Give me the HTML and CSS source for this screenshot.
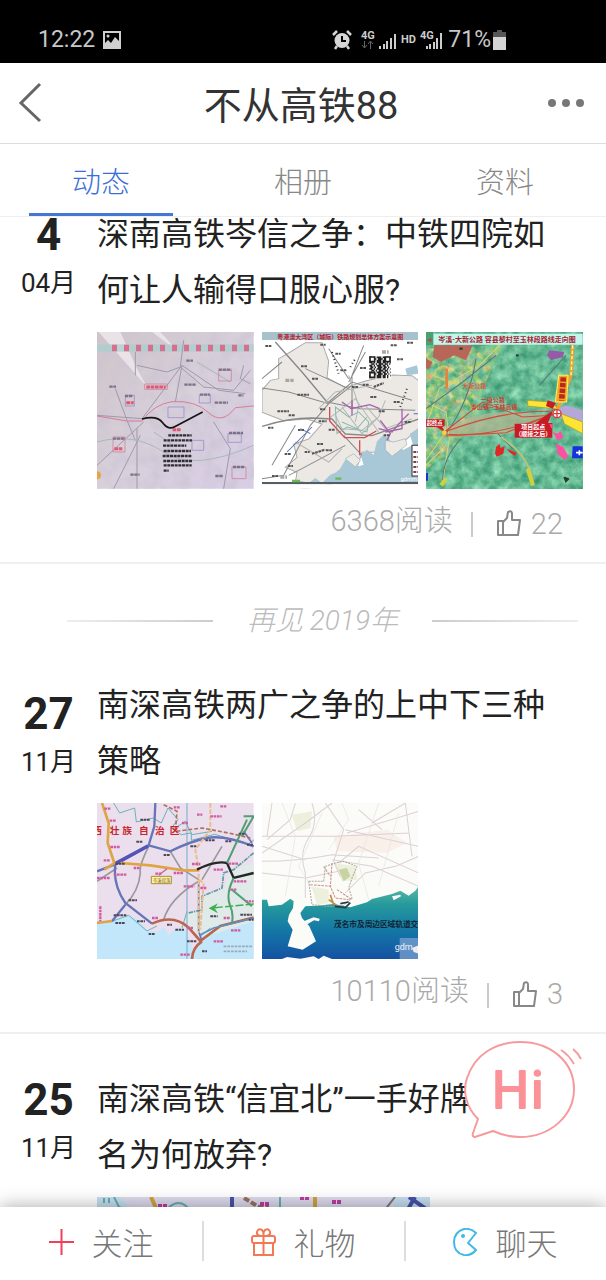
FILE: index.html
```html
<!DOCTYPE html>
<html lang="zh-CN">
<head>
  <meta charset="UTF-8" />
  <meta name="viewport" content="width=device-width, initial-scale=1" />
  <title>不从高铁88</title>
  <link rel="stylesheet" href="styles.css">
</head>
<body>
<div class="app">

  <div class="status">
    <span>12:22</span>
    <svg class="status-pic" width="18" height="18" viewBox="0 0 18 18">
      <path fill="none" stroke="#d0d0d0" stroke-width="2" d="M1 1h16v16H1z"/>
      <path fill="#d0d0d0" d="M2 12l3-3 3 3 4-6 5 5v6H2z"/>
      <circle cx="5" cy="5" r="1.5" fill="#d0d0d0"/>
    </svg>
    <div class="status-right">
      <svg width="20" height="20" viewBox="0 0 20 20">
        <circle cx="10" cy="10.500" r="7.500" fill="#d6d6d6"/>
        <path stroke="#d6d6d6" stroke-width="2.500" d="M1 5l4-4M19 5l-4-4M5 16l-2 3M15 16l2 3"/>
        <path fill="none" stroke="#000" stroke-width="2" d="M10 6v5h4"/>
      </svg>
      <svg width="82" height="22" viewBox="0 0 82 22">
        <g fill="#ccc" class="tiny">
          <text x="0" y="10">4G</text>
          <text x="40" y="14">HD</text>
          <text x="59" y="10">4G</text>
        </g>
        <path stroke="#666" fill="none" d="M3.500 12v7M1 16l2.500 3L6 16M9.500 20v-7M7 15l2.500-3 2.500 3"/>
        <path stroke="#ccc" stroke-width="2" d="M19 20v-3M23 20v-5M26 20v-8M30 20V9M34 20V5M66 20v-3M69 20v-5M73 20v-7M76 20V9M80 20V4"/>
      </svg>
      <span>71%</span>
      <svg width="13" height="20" viewBox="0 0 13 20">
        <path fill="#555" d="M4 0h5v2h4v5H0V2h4z"/>
        <path fill="#d4d4d4" d="M0 7h13v13H0z"/>
      </svg>
    </div>
  </div>

  <header class="nav">
    <button class="nav-btn" aria-label="返回">
      <svg width="24" height="44" viewBox="0 0 24 44"><path d="M22 3L3 22l19 18" fill="none" stroke="#666" stroke-width="3"/></svg>
    </button>
    <h1>不从高铁88</h1>
    <button class="nav-btn" aria-label="更多">
      <svg width="36" height="8" viewBox="0 0 36 8" fill="#777"><circle cx="4" cy="4" r="4"/><circle cx="18" cy="4" r="4"/><circle cx="32" cy="4" r="4"/></svg>
    </button>
  </header>

  <nav class="tabs">
    <button class="tab active">动态</button>
    <button class="tab">相册</button>
    <button class="tab">资料</button>
  </nav>

  <main class="feed">
    <article class="item">
      <div class="date"><b>4</b><span>04月</span></div>
      <div class="content">
        <h2>深南高铁岑信之争：中铁四院如何让人输得口服心服?</h2>
        <div class="photos">
          <svg viewBox="0 0 470 470">
            <defs>
              <linearGradient id="paper" x1="0" y1="0" x2="1" y2="1">
                <stop offset="0" stop-color="#cfc5c8"/><stop offset=".5" stop-color="#d8d0db"/><stop offset="1" stop-color="#d9cde6"/>
              </linearGradient>
              <filter id="grain" x="0" y="0" width="1" height="1">
                <feTurbulence type="fractalNoise" baseFrequency=".025" numOctaves="4" seed="3"/>
                <feColorMatrix values="0 0 0 0 .6  0 0 0 0 .55  0 0 0 0 .65  1.500 0 0 0 -.5"/>
              </filter>
            </defs>
            <path fill="url(#paper)" d="M0 0h470v470H0z"/>
            <path filter="url(#grain)" d="M0 0h470v470H0z"/>
            <path d="M5 0l145 165-30-55L70 0zM165 0l80 60-55-60z" fill="#f3eef2" opacity=".7"/>
            <path d="M0 48h470" stroke="#a8cfcd" stroke-width="22" opacity=".7"/>
            <path d="M45 48h420" stroke="#d5708f" stroke-width="20" stroke-dasharray="15 21"/>
            <g fill="none" stroke="#a09aa9" stroke-width="3">
              <path d="M0 250l135 10 120-160 110 75 80 10M55 170l35 95 25 60M120 100l90 20 40-15 10-80M255 100l-20 110M0 400l140-130M50 470l80-160M120 290v180M115 60v70M250 105l70 60 90 10 50-60M350 270l50 80-20 120M440 100l-10 40 30 15"/>
              <path d="M0 330q110-30 200 30t270-20M170 300l60 40M300 90l100 60" stroke="#aab9b5"/>
            </g>
            <path fill="none" stroke="#d67c93" stroke-width="3" d="M0 252l90 15h45q35-50 90-58 70-5 110 33t80-15l55-5"/>
            <path fill="none" stroke="#cf7390" stroke-width="2" d="M143 156h68v16h-68zM365 115h38v32h-38zM48 315h36v45H48zM405 405h42v35h-42z"/>
            <path fill="none" stroke="#8d83c1" stroke-width="2" d="M85 190h27v32H85zM213 225h48v32h-48zM307 188h33v25h-33zM393 305h40v26h-40zM285 325h35v30h-35z"/>
            <path stroke="#7c7289" stroke-width="7" stroke-dasharray="10 2" d="M37 164h20M268 86h20M262 158h34M424 190h15M353 212h40M84 192h24M309 188h30M365 113h38M396 303h42M48 320h34M100 428h28M408 405h34M355 432h24"/>
            <path stroke="#e25773" stroke-width="9" stroke-dasharray="11 2" d="M148 165h58M88 212h22M227 293h24M52 350h26"/>
            <path fill="none" stroke="#151515" stroke-width="5" d="M135 261q45-12 62 11t36 12l84-44"/>
            <path stroke="#302d35" stroke-width="7" stroke-dasharray="9 2" d="M214 310h70M200 325h85M198 341h70M200 357h82M197 372h86M199 387h86M200 400h84M200 416h15"/>
            <circle cx="0" cy="430" r="12" fill="#e6a546"/>
          </svg>
          <svg viewBox="0 0 470 470">
            <path fill="#fff" d="M0 0h470v470H0z"/>
            <path fill="#ece9e5" stroke="#aaa" stroke-width="3" d="M85 60l45-28 50 0 20 55-5 50 55 30 60-20 80-18 60 2 40 30v110l-100 90-90 0-20 60-30-20-25 20-15 35-50 10-40 5-20-20 5-30-35-15 35-30-10-40 45-15 40-45-45-15-70 5-65-25L0 175l25-30 25-5 0-60z"/>
            <path fill="#a8c7d7" d="M470 260v195H90l15-12 35 10 20-15 20 15 25-25 25-10 20-35 25 5 15 15 15-5-10-30 20-15 20 15 10-40 20-20 15 10 15 25 30 10 28-15-10-32 30-20 30-25zM430 110l35-10 5 25-35 5z"/>
            <path fill="#edeae6" stroke="#9aafb9" stroke-width="2" d="M370 325l25 5 35-10 5 18-25 20-20 15-20-20zM250 380l25-15 20 20-15 20z"/>
            <g fill="none" stroke="#888" stroke-width="3">
              <path stroke-width="4" d="M0 283q80-25 150-25l60 3 40 45 80 5 140-50M40 30l80 90 75 90"/>
              <path d="M195 210l100 20 165 5M0 168l80 12 120 35 70-55M270 230V130l35-90M0 440l65-10 80-150 55-65M200 50l60 90M80 430l40-20 130-70M100 280l-70 120M200 210l70-60 180 55M0 140l60-50M300 370l-55-60M310 60l-50 90M130 110l130 60"/>
              <path stroke="#b2b8b4" d="M220 250l20 40 60 5 50-40 20-50M260 130l30 90-10 50M200 260l80-60 70 100M240 225l60 80 50-50M170 230l50-50 110-20M310 220l60 70 80-30M100 330l100 60 40-40"/>
            </g>
            <g fill="none" stroke="#8bb8b0" stroke-width="3"><path d="M220 225l40 30 30-15 30 30-5 30-60-15-30 20zM240 270l45 20 30-35"/></g>
            <path fill="none" stroke="#a661ab" stroke-width="4" d="M240 210l28 20 55-12 30 12M350 290l40 10 30-35 20-20M355 265l30 40-10 20M420 230v60l-50 10M270 205v45"/>
            <path fill="none" stroke="#cf4c58" stroke-width="4" d="M203 225v42l45 50 60 0 35-20M293 325v45"/>
            <path fill="none" stroke="#5570b5" stroke-width="3" d="M75 360l75-75M115 290l30 15M455 245h15"/>
            <path fill="none" stroke="#333" stroke-width="6" stroke-dasharray="3 8" d="M210 60l20 65M265 105l15-25M415 225l20-55"/>
            <path stroke="#555" stroke-width="6" stroke-dasharray="8 2" d="M10 42h18M117 103h18M150 140h20M106 188h35M46 238h35M80 250h18M18 287h16M174 232h16M170 268h24M108 294h18M200 293h20M165 336h20M68 366h18M192 355h18M78 402h15M128 360h15M30 432h20M235 115h18M294 108h18M302 158h18M270 165h20M325 195h18M350 238h20M395 210h20M386 40h18M435 32h18M405 82h18M150 365l40-12M335 165l30-12M220 65h16M175 38h16M428 270h20M365 310h20"/>
            <path stroke="#aca5a0" stroke-width="10" stroke-dasharray="12 3" d="M70 145h25M360 60h20M55 435h20"/>
            <path fill="#fff" d="M320 72h68v68h-68z"/>
            <path stroke="#222" stroke-width="5" stroke-dasharray="9 4 4 5 14 4" d="M322 76h64M326 81h60M322 86h60M322 91h64M328 96h58M322 101h60M325 106h60M322 111h64M328 116h54M322 121h64M326 126h56M322 131h64M322 136h60"/>
            <path fill="#fff" stroke="#222" stroke-width="5" d="M324 75h14v14h-14zM370 75h14v14h-14zM324 122h14v14h-14z"/>
            <path fill="#fff" stroke="#333" stroke-width="3" d="M450 340h20v92h-20z"/>
            <path stroke="#7b4047" stroke-width="6" stroke-dasharray="9 3" d="M454 360h15M454 375h15M454 390h15M454 405h15M454 420h15"/>
            <path fill="#a7c2cc" d="M0 0h470v24H0z"/>
            <text x="235" y="20" text-anchor="middle" font-size="18" font-weight="bold" fill="#b6202d">粤港澳大湾区（城际）铁路规划总体方案示意图</text>
            <path fill="#555e63" d="M0 450h470v7H0z"/><path fill="#fff" d="M0 457h470v13H0z"/>
            <path stroke="#69b952" stroke-width="7" d="M90 447h24M220 440h18"/>
            <text x="416" y="446" font-size="17" fill="#fff">gdmm</text>
          </svg>
          <svg viewBox="0 0 470 470">
            <defs>
              <filter id="terrain" x="0" y="0" width="1" height="1" color-interpolation-filters="sRGB">
                <feTurbulence type="fractalNoise" baseFrequency=".035" numOctaves="5" seed="8"/>
                <feColorMatrix values=".5 0 0 0 .15  .4 0 0 0 .53  .4 0 0 0 .38  0 0 0 0 1"/>
              </filter>
              <filter id="farm" x="0" y="0" width="1" height="1" color-interpolation-filters="sRGB">
                <feTurbulence type="fractalNoise" baseFrequency=".05" numOctaves="4" seed="15"/>
                <feColorMatrix values=".7 0 0 0 .3  0 .4 0 0 .58  0 0 .7 0 .15  2 0 0 0 -.5"/>
                <feComposite in2="SourceGraphic" operator="in"/>
              </filter>
            </defs>
            <path filter="url(#terrain)" d="M0 0h470v470H0z"/>
            <path filter="url(#farm)" d="M0 50l230-10-60 130-30 110-80 90-60 40z"/>
            <path d="M25 40h115l-20 45-35-15-40 20-25-15zM0 80l20 10-10 20H0z" fill="#b76658"/>
            <path d="M370 55l45 5-5 15-35 10-12-15z" fill="#965aa8"/>
            <path d="M60 285q100-50 220-45l90 10-60 45q-130 25-250 15z" fill="#b3b791" opacity=".75"/>
            <g fill="none" stroke="#d9d473" stroke-width="3"><path d="M0 280l40-110 120-70 60-60M0 210l60 30 10 80-20 130M55 305l-55 80M20 130l80 30M0 400l60-60"/></g>
            <g fill="none" stroke="#55787a" stroke-width="3"><path d="M60 305q70-95 90-225M50 445q0-65 55-125M260 350l-45-45M0 230l110-80 100-80M420 70l-80 90"/></g>
            <path fill="none" stroke="#d1493b" stroke-width="3" d="M55 300q120-45 215-56t120-2M55 300l115-90 120 45 90-5M60 307q160 10 325-65M60 312l180-10 150-60"/>
            <path d="M370 240l50-20 50 15v55l-45-20z" fill="#b5a8d9"/>
            <path fill="#ffe433" stroke="#a59c28" stroke-width="2" d="M305 205l75 6 15 20-90-9zM405 245l65 25v35l-55-30z"/>
            <path fill="none" d="M225 315q90 60 96 145" stroke="#b3c47d" stroke-width="6"/>
            <path d="M305 410l16 50M60 440l-14 20" stroke="#d0d13b" stroke-width="12"/>
            <path fill="none" stroke="#f2a229" stroke-width="10" d="M440 40l-5 90-40 100-5 15"/>
            <path fill="none" stroke="#fff8a0" stroke-width="4" stroke-dasharray="10 6" d="M440 40l-5 90"/>
            <path fill="#f7a62b" stroke="#fff252" stroke-width="3" d="M398 130h28l-4 80h-34z"/>
            <path stroke="#b82a1b" stroke-width="17" stroke-dasharray="13 4" d="M412 136l-5 70"/>
            <path stroke="#e78338" stroke-width="8" d="M62 110v60"/>
            <path fill="#c91b26" d="M0 262h56v20l-8 3 12 18-28-18H0zM266 275h60l55-40-15 38h13v44H266zM365 205l25 8-10 17-20-8z"/>
            <circle cx="393" cy="245" r="12" fill="#fff" stroke="#d83a35" stroke-width="4"/><path d="M382 245h22M393 234v22" stroke="#d83a35" stroke-width="4"/>
            <circle cx="55" cy="302" r="7" fill="#f6ce43"/>
            <path fill="#df2926" d="M210 345l10-9 4 12 12-5-4 22-20 9-5-10zM242 350l30 12-5 10-15-10z"/>
            <path fill="#ff4fa0" d="M380 300l15 5 8-8 10 20-18 8zM390 335l22 10 15 28-12 10-20-18zM370 275l12 3-6 12z"/>
            <path fill="#1332db" d="M440 343h30v36h-32zM0 423h6v23H0z"/><path stroke="#fff" stroke-width="5" d="M460 355v15M450 362h20"/>
            <path stroke="#26433a" stroke-width="7" d="M415 435l5 12 8-8M270 70h8M100 50h10"/>
            <text x="2" y="279" font-size="16" font-weight="bold" fill="#fff">起终点</text>
            <g font-size="18" font-weight="bold" text-anchor="middle">
              <text x="322" y="292" fill="#fff">项目起点</text><text x="322" y="311" fill="#fff">（顺接之后）</text>
              <text x="200" y="211" fill="#c9402f">一级公路</text><text x="205" y="230" fill="#c9402f">岑山镇—玉林高速</text>
              <text x="145" y="167" fill="#d95a4d">大新公路</text>
            </g>
            <path fill="#c4f5ed" d="M0 5h470v33H0z"/><path fill="#49a16f" d="M0 0h22v40H0z"/><path d="M3 25l12-8 3 14z" fill="#b24d4d"/>
            <text x="243" y="29" text-anchor="middle" font-size="21" font-weight="bold" fill="#a91e33">岑溪-大新公路 容县黎村至玉林段路线走向图</text>
          </svg>
        </div>
        <div class="meta">
          <span>6368阅读</span><i class="bar"></i>
          <button class="like"><svg width="24" height="27" viewBox="0 0 24 27"><path d="M1 11h5v14H1zM6 12l4-4 1-6q3-2 4 1v7h8l-2 15H6" fill="none" stroke="#888" stroke-width="2" stroke-linejoin="round"/></svg>22</button>
        </div>
      </div>
    </article>

    <div class="year"><span>再见 2019年</span></div>

    <article class="item new-year">
      <div class="date"><b>27</b><span>11月</span></div>
      <div class="content">
        <h2>南深高铁两广之争的上中下三种策略</h2>
        <div class="photos">
          <svg viewBox="0 0 470 470">
            <path fill="#ebdfee" d="M0 0h470v470H0z"/>
            <path fill="#dfeae9" d="M470 180l-70 20-20 60-65 20-5 40-40 10 0 40 40 30 160-20z"/>
            <path fill="#c2e7fa" d="M0 358l45-3 50-18 25 10 30 35 30 5 20-15 15 25 25-22 25 5 25 65-10 25H0zM310 400l50-10 110-35v115H270l25-40z"/>
            <path fill="none" stroke="#68b2b5" stroke-width="3" d="M50 0l18 30 45-15 5 42 50-12 25 15 20-45 30 35-20 25 30 20 30-5 0 22 70-18 100 30 20-15M235 75l30-20 20 40 60-10M0 358l45-3 50-18 55 47 30-15M270 325l-15 50M310 400l30-25"/>
            <path fill="none" stroke="#5b9c9f" stroke-width="5" stroke-dasharray="14 3 4 3" d="M470 150l-60 50-30 10-5 45-60 25v40l-40 10"/>
            <path d="M270 0v470" stroke="#75adc7" stroke-width="3"/>
            <g fill="none" stroke="#999" stroke-width="5"><path d="M155 130q-30 60-25 80-5 55-45 95M220 145l30 50 55 35M305 235q-85 50-105 115M315 230l60-100M60 195l-60 40"/></g>
            <g fill="none" stroke="#6874b8" stroke-width="7"><path d="M175 0l-3 70-17 57-95 55L0 205M155 127l65 18q60-30 110-40t140 25M55 185q-8 60 30 115l80 62M85 305l-40 50"/><path stroke-width="5" d="M305 235v150l10 30M440 85l25 35"/></g>
            <path fill="none" stroke="#5553b6" stroke-width="11" d="M55 182l98-53"/>
            <path fill="none" stroke="#dfa544" stroke-width="8" d="M15 0l20 60-3 60 20 60-30 20M70 180l90 7 100 15h45M0 360l45-6"/>
            <path fill="none" stroke="#e9bd8c" stroke-width="6" stroke-dasharray="14 5" d="M340 0v80l-45 60 10 60v190M305 230l15 10-10 140"/>
            <path fill="none" stroke="#b06f5a" stroke-width="5" stroke-dasharray="12 6" d="M200 5l40 20-5 60 80-10 80 15 65 15"/>
            <path fill="none" stroke="#262626" stroke-width="7" d="M300 200q55-28 90-20l20 45 60-15"/>
            <path fill="none" stroke="#ba654d" stroke-width="8" d="M165 362q65-30 110 12l35 40 60-45 100-25M315 415q-30 20-30 55"/>
            <path fill="none" stroke="#4f9f72" stroke-width="6" d="M410 225q-25 50-10 85 10 20 5 50M390 180l60-130M440 40h30l-35 60M405 260l60 50"/>
            <path fill="none" stroke="#5b91c5" stroke-width="5" d="M310 395l40-20 120-30"/>
            <path fill="none" stroke="#3bb04e" stroke-width="4" stroke-dasharray="24 7" d="M470 303l-125 12"/><path fill="#3bb04e" d="M335 316l28-15-10 15 10 15z"/>
            <path stroke="#d05ca2" stroke-width="7" stroke-dasharray="8 2" d="M22 17h20M38 53h18M40 132h30M20 172h18M50 215h40M110 195h20M175 212h18M230 210h30M260 250h32M285 183h25M350 200h28M395 182h30M410 235h38M400 260h18M230 13h18M255 60h18M300 35h16M340 40h34M370 10h20M445 295h25M402 382h28M350 415h30M250 455h30M10 310v45M270 375h20M380 345h20M0 225h40M165 345h20M310 255h20"/>
            <path stroke="#4c4857" stroke-width="6" stroke-dasharray="8 2" d="M118 116h20M200 156h20M55 182h28M95 292h25M120 355h24M50 337h40M55 360h30M155 393h18M235 380h26M210 365h15M280 130h20M325 112h30M385 115h20M425 92h20M450 125h20M430 335h35M340 340h22M270 415h28M315 445h15M130 50h30M455 350h15"/>
            <path stroke="#9aa9b5" stroke-width="5" stroke-dasharray="8 3" d="M380 430h85M380 445h70"/>
            <path fill="#fff0a6" stroke="#a88d34" stroke-width="3" d="M163 220h60v22h-60z"/><text x="168" y="236" font-size="13" fill="#846830">岑溪段落</text>
            <path stroke="#d05ca2" stroke-width="4" d="M185 217l25-20"/>
            <g font-size="29" fill="#c9232b" font-weight="bold"><text x="-14" y="93">西</text><text x="38" y="93">壮</text><text x="76" y="93">族</text><text x="126" y="93">自</text><text x="174" y="93">治</text><text x="218" y="93">区</text></g>
          </svg>
          <svg viewBox="0 0 470 470">
            <defs><linearGradient id="sea" x1="0" y1="0" x2="0" y2="1"><stop offset="0" stop-color="#74c4a8"/><stop offset=".3" stop-color="#279b9c"/><stop offset=".65" stop-color="#1376a6"/><stop offset="1" stop-color="#1550a2"/></linearGradient></defs>
            <path fill="#fbfbf8" d="M0 0h470v470H0z"/>
            <path fill="#edf0dc" d="M90 35l60-10-5 50-40 10zM215 180l65 10 5 40-45 5zM150 250l50 10 0 40-35 5z"/><path fill="#c7d3a0" d="M230 200l25-5 10 25-20 15z"/>
            <path fill="#faf0ea" d="M215 100l160-20 60 40-60 30-150-5z"/>
            <path fill="url(#sea)" d="M0 290l15 0 5 20 40-5 25-18 10 8-2 20-12 20-4 20 15 25-15 50 45 10 40-25-20-45-22-25-5-15 15-20 35-2 50-5 50 10 50-15 15-10 60-15 25-10 25 15 20-15 20-28 20-5 20 27V470H0z"/>
            <path fill="#faf9f6" d="M55 470l20-8 40 5 40-7 15 8 15-10 30 12zM390 280l25-5 2 5-22 12zM125 355l30-12 18 4-2 8-15-3-25 15z"/>
            <g fill="none" stroke="#ddd0d5" stroke-width="3">
              <path d="M150 0q20 60-10 105t-10 105v75M30 0l-15 100M0 150l130-90 80-60M0 175q110 0 210-20l140 10M0 100h220l220-10M190 0l55 80-30 95 20 45M470 25q-130 40-215 65M470 130l-220-50M470 250l-140-60-120-20M0 210l130 15 100-20M230 180l60-50 180 80M330 60l100-60M290 20l70 60M0 130l130 40M430 0l20 160M100 0l-15 50-70 60M250 270l60-60 90-20 70-30"/>
              <path stroke="#e2e5e0" stroke-width="2" d="M60 0l40 100-30 180M240 0l20 50-60 90M350 0l-60 180 30 110M410 30l-60 220M180 30l-70 160 50 80"/>
            </g>
            <path fill="none" stroke="#aaa99e" stroke-width="3" stroke-dasharray="6 3" d="M140 235l45 0 5-45 30-10 25-5 40 15-15 35-10 30 10 30-30 25-40 0-50-5-10-70"/>
            <path fill="none" stroke="#ce8f8c" stroke-width="3" stroke-dasharray="8 3" d="M210 180l-5 70 15 35 40 5M145 245l65 5M185 190l20 30M225 260l45 30"/>
            <path fill="none" stroke="#be8e45" stroke-width="5" d="M200 290l25 18M205 275l10 30"/>
            <path fill="none" stroke="#263b42" stroke-width="5" d="M218 310l32 4 15-15M235 302l25-5"/>
            <text x="216" y="372" font-size="23" font-weight="bold" fill="#102538">茂名市及周边区域轨道交</text>
            <path fill="#7aa2d0" d="M413 405h57v65h-57z" opacity=".75"/><path d="M450 435l20-8v25l-15-5z" fill="#eee"/>
            <text x="398" y="442" font-size="27" fill="#eef4fb">gdm</text>
          </svg>
        </div>
        <div class="meta">
          <span>10110阅读</span><i class="bar"></i>
          <button class="like"><svg width="24" height="27" viewBox="0 0 24 27"><path d="M1 11h5v14H1zM6 12l4-4 1-6q3-2 4 1v7h8l-2 15H6" fill="none" stroke="#888" stroke-width="2" stroke-linejoin="round"/></svg>3</button>
        </div>
      </div>
    </article>

    <article class="item">
      <div class="date"><b>25</b><span>11月</span></div>
      <div class="content">
        <h2>南深高铁“信宜北”一手好牌<br>名为何放弃?</h2>
        <svg class="cover" viewBox="0 0 333 220">
          <path fill="#dddbed" d="M0 0h333v220H0z"/><path fill="#c5dff0" d="M0 0h22l15 14v206H0zM295 0h38v220z"/>
          <path fill="none" stroke="#65aeb5" stroke-width="2" d="M17 0l5 10 10 4M70 12q12-12 22 0M183 0v220M7 1v5M12 1v5"/>
          <path fill="none" stroke="#d2a040" stroke-width="4" d="M54 0l9 20M218 0v30"/>
          <path fill="none" stroke="#4852aa" stroke-width="4" d="M135 0v40M312 0l20 14M310 14l8-14"/>
          <path fill="none" stroke="#9a7160" stroke-width="4" stroke-dasharray="6 2" d="M147 1l15 9h10"/>
          <path stroke="#777" stroke-width="2" d="M287 14l11-14"/>
          <path stroke="#bb3da0" stroke-width="4" stroke-dasharray="4 1" d="M61 9h10M163 7h10M203 1h9M235 5h10"/>
        </svg>
      </div>
    </article>
  </main>

  <button class="hi" aria-label="打招呼">
    <svg width="120" height="100" viewBox="0 0 120 100">
      <path d="M15 79C2 66 0 50 4 38 12 14 33 2 57 2c31 0 54 20 54 47S87 97 57 97q-14 0-27-6L12 97q-3 0-2-4z" fill="#fff" stroke="#f79a9e" stroke-width="2" stroke-linejoin="round"/>
      <path d="M98 10q8 5 13 14M110 9q5 4 8 10" fill="none" stroke="#f79a9e" stroke-width="2"/>
      <text x="29 68" y="68" font-size="52" fill="#fb9297" stroke="#fb9297" stroke-width="2" stroke-linejoin="round">Hi</text>
    </svg>
  </button>

  <footer class="actions">
    <button>
      <svg width="25" height="28" viewBox="0 0 25 28"><path d="M12.500 1v26M0 14h25" stroke="#f0405c" stroke-width="2"/></svg>关注
    </button>
    <button>
      <svg width="25" height="28" viewBox="0 0 25 28" fill="none" stroke="#f17a54" stroke-width="2"><rect x="1" y="8" width="23" height="7" rx="2"/><path d="M3 15v12h19V15M12.500 8v19M12.500 8Q5 8 6 4t5-2q2 2 1.500 6Q20 8 19 4t-5-2q-2 2-1.500 6"/></svg>礼物
    </button>
    <button>
      <svg width="25" height="28" viewBox="0 0 25 28"><path d="M23 5q-5-5-12-4Q1 4 1 14q0 11 10 13 7 1 12-5l-8-7z" fill="none" stroke="#3fb9ea" stroke-width="2" stroke-linejoin="round"/><circle cx="10" cy="8" r="2" fill="#3fb9ea"/></svg>聊天
    </button>
  </footer>

</div>
</body>
</html>
```

FILE: styles.css
```css
* {
  box-sizing: border-box;
}
body {
  margin: 0;
  background: #fff;
  color: #222;
  font-family: Roboto, "Noto Sans CJK SC", sans-serif;
}
button {
  margin: 0;
  padding: 0;
  border: none;
  background: none;
  font: inherit;
  color: inherit;
  cursor: pointer;
}
svg {
  display: block;
}
.app {
  position: relative;
  display: flex;
  flex-direction: column;
  height: 100vh;
  overflow: hidden;
}

/* status bar */
.status {
  display: flex;
  align-items: center;
  height: 63px;
  padding: 16px 100px 0 38px;
  background: #000;
  color: #c8c8c8;
  font-size: 23px;
}
.status-pic {
  margin-left: 8px;
}
.status-right {
  display: flex;
  align-items: center;
  margin-left: auto;
}
.status-right svg + svg {
  margin-left: 9px;
}
.status-right span {
  margin: 0 2px 0 5px;
}
.tiny {
  font-size: 11px;
  font-weight: bold;
}

/* top navigation */
.nav {
  display: flex;
  align-items: center;
  justify-content: space-between;
  height: 81px;
  padding: 0 22px 0 18px;
  border-bottom: 1px solid #ddd;
}
.nav-btn {
  display: flex;
  align-items: center;
  width: 36px;
  height: 44px;
}
h1 {
  margin: 0;
  padding-top: 6px;
  font-size: 38px;
  font-weight: normal;
  line-height: 56px;
  color: #333;
}
.tabs {
  display: flex;
  height: 73px;
  border-bottom: 1px solid #eee;
}
.tab {
  flex: 1;
  display: flex;
  flex-direction: column;
  align-items: center;
  justify-content: space-between;
  padding-top: 18px;
  font-size: 29px;
  font-weight: 300;
  line-height: 42px;
  color: #888;
}
.tab::after {
  content: "";
  width: 144px;
  max-width: 72%;
  height: 3px;
}
.tab.active {
  color: #3b6fd6;
}
.tab.active::after {
  background: #4577d4;
}

/* feed */
.feed {
  flex: 1;
  min-height: 0;
  overflow: hidden;
}
.feed .item:first-child {
  margin-top: -48px;
}
.item {
  display: flex;
  padding: 37px 23px 20px 0;
  border-bottom: 2px solid #f0f0f0;
}
.date {
  flex: none;
  width: 97px;
  text-align: center;
}
.date b,
.date span {
  display: block;
}
.date b {
  font-size: 44px;
  line-height: 58px;
}
.date span {
  font-size: 26px;
  line-height: 38px;
}
.new-year .date {
  padding-top: 8px;
}
.content {
  flex: 1;
  min-width: 0;
}
h2 {
  margin: 0;
  padding-right: 32px;
  font-size: 32px;
  font-weight: normal;
  line-height: 56px;
}
.photos {
  display: grid;
  grid-template-columns: repeat(3, 1fr);
  gap: 8px;
  margin-top: 14px;
}
.photos svg,
.cover {
  width: 100%;
  overflow: hidden;
}
.cover {
  max-width: 333px;
  margin-top: 14px;
}
.meta {
  display: flex;
  justify-content: flex-end;
  align-items: center;
  height: 42px;
  margin-top: 11px;
  padding-right: 20px;
  font-size: 29px;
  font-weight: 300;
  line-height: 38px;
  color: #aaa;
}
.bar {
  width: 2px;
  height: 25px;
  margin: 8px 24px 0 18px;
  background: #ccc;
}
.like {
  display: flex;
  align-items: center;
  gap: 10px;
  padding-top: 6px;
}
.year {
  display: flex;
  align-items: center;
  gap: 34px;
  padding: 38px 28px 0 67px;
  font-size: 28px;
  font-weight: 300;
  font-style: italic;
  line-height: 38px;
  color: #bbb;
}
.year::before,
.year::after {
  content: "";
  flex: 1;
  height: 2px;
  background: linear-gradient(to right, #eee, #ccc);
}
.year::after {
  background: linear-gradient(to left, #eee, #ccc);
}

/* floating greeting */
.hi {
  position: absolute;
  right: 23px;
  bottom: 140px;
}

/* bottom actions */
.actions {
  position: relative;
  display: flex;
  height: 73px;
  background: #fff;
  box-shadow: 0 0 18px rgba(0, 0, 0, 0.35);
}
.actions button {
  flex: 1;
  display: flex;
  align-items: center;
  justify-content: center;
  gap: 18px;
  padding-bottom: 4px;
  font-size: 31px;
  font-weight: 300;
  color: #777;
}
.actions button + button {
  background: linear-gradient(#ddd, #ddd) left 14px / 2px 40px no-repeat;
}
```
